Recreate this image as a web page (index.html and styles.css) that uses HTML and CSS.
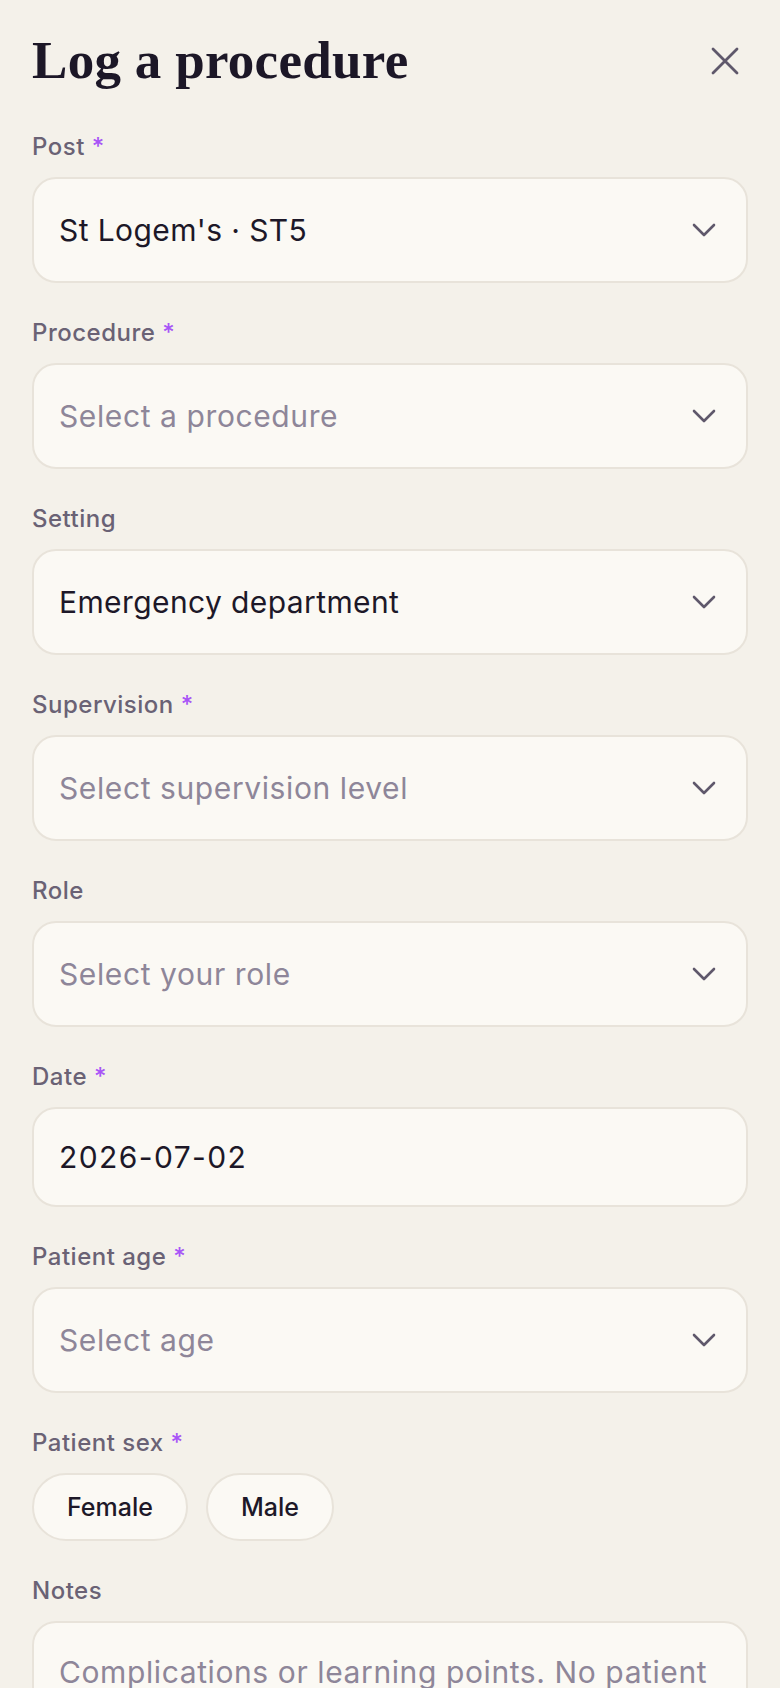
FILE: index.html
```html
<!DOCTYPE html>
<html lang="en">
<head>
    <meta charset="UTF-8">
    <meta name="viewport" content="width=device-width, initial-scale=1.0">
    <title>Log a procedure</title>
    <link rel="stylesheet" href="styles.css">
</head>
<body>
    <div class="sheet">
        <header class="sheet-head">
            <h1>Log a procedure</h1>
            <button class="close-btn" type="button" aria-label="Close">
                <svg width="28" height="28" viewBox="0 0 28 28" fill="none" stroke="currentColor" stroke-width="2.8" stroke-linecap="round">
                    <path d="M2 2L26 26M26 2L2 26"/>
                </svg>
            </button>
        </header>

        <form class="log-form">
            <div class="field">
                <label>Post <span class="req">*</span></label>
                <button type="button" class="select">
                    <span class="value">St Logem's · ST5</span>
                    <svg class="chevron" width="24" height="14" viewBox="0 0 24 14"><path d="M2 2L12 12L22 2"/></svg>
                </button>
            </div>

            <div class="field">
                <label>Procedure <span class="req">*</span></label>
                <button type="button" class="select">
                    <span class="value placeholder">Select a procedure</span>
                    <svg class="chevron" width="24" height="14" viewBox="0 0 24 14"><path d="M2 2L12 12L22 2"/></svg>
                </button>
            </div>

            <div class="field">
                <label>Setting</label>
                <button type="button" class="select">
                    <span class="value">Emergency department</span>
                    <svg class="chevron" width="24" height="14" viewBox="0 0 24 14"><path d="M2 2L12 12L22 2"/></svg>
                </button>
            </div>

            <div class="field">
                <label>Supervision <span class="req">*</span></label>
                <button type="button" class="select">
                    <span class="value placeholder">Select supervision level</span>
                    <svg class="chevron" width="24" height="14" viewBox="0 0 24 14"><path d="M2 2L12 12L22 2"/></svg>
                </button>
            </div>

            <div class="field">
                <label>Role</label>
                <button type="button" class="select">
                    <span class="value placeholder">Select your role</span>
                    <svg class="chevron" width="24" height="14" viewBox="0 0 24 14"><path d="M2 2L12 12L22 2"/></svg>
                </button>
            </div>

            <div class="field">
                <label for="date">Date <span class="req">*</span></label>
                <input type="text" id="date" class="text-input" value="2026-07-02">
            </div>

            <div class="field">
                <label>Patient age <span class="req">*</span></label>
                <button type="button" class="select">
                    <span class="value placeholder">Select age</span>
                    <svg class="chevron" width="24" height="14" viewBox="0 0 24 14"><path d="M2 2L12 12L22 2"/></svg>
                </button>
            </div>

            <div class="field">
                <label>Patient sex <span class="req">*</span></label>
                <div class="pills">
                    <button type="button" class="pill">Female</button>
                    <button type="button" class="pill">Male</button>
                </div>
            </div>

            <div class="field">
                <label for="notes">Notes</label>
                <textarea id="notes" class="notes" rows="4" placeholder="Complications or learning points. No patient identifiers."></textarea>
            </div>
        </form>
    </div>
</body>
</html>
```

FILE: styles.css
```css
body {
    margin: 0;
    background-color: #f4f1ea;
    color: #1d1828;
    font-family: 'Inter', 'Liberation Sans', sans-serif;
}

.sheet {
    padding: 30px 32px 40px;
}

.sheet-head {
    display: flex;
    justify-content: space-between;
    align-items: center;
    height: 60px;
    margin-bottom: 42px;
}

h1 {
    margin: 0;
    font-family: 'Liberation Serif', 'Times New Roman', serif;
    font-size: 53px;
    line-height: 60px;
    font-weight: bold;
    letter-spacing: 0.3px;
    color: #1c1727;
}

.close-btn {
    width: 50px;
    height: 50px;
    padding: 0;
    margin: 2px -2px 0 0;
    border: none;
    background: none;
    color: #5f586b;
    display: flex;
    align-items: center;
    justify-content: center;
    cursor: pointer;
}

.log-form {
    display: flex;
    flex-direction: column;
    gap: 35px;
}

.field {
    display: flex;
    flex-direction: column;
}

.field label {
    font-size: 24px;
    line-height: 30px;
    font-weight: 500;
    letter-spacing: 0.5px;
    color: #6a6275;
    margin-bottom: 15px;
}

.req {
    color: #a855f7;
}

.select,
.text-input,
.notes,
.pill {
    box-sizing: border-box;
    background-color: #fbf9f4;
    border: 2px solid #e8e3da;
    font-family: inherit;
    color: #1d1828;
}

.select {
    display: flex;
    align-items: center;
    justify-content: space-between;
    width: 100%;
    height: 106px;
    padding: 0 30px 0 25px;
    border-radius: 24px;
    text-align: left;
    cursor: pointer;
}

.value {
    font-size: 30px;
    line-height: 36px;
    letter-spacing: 0.4px;
}

.placeholder {
    color: #8e8699;
    letter-spacing: 0.6px;
}

.chevron {
    fill: none;
    stroke: #5f586b;
    stroke-width: 2.6;
    stroke-linecap: round;
    stroke-linejoin: round;
}

.text-input {
    width: 100%;
    height: 100px;
    padding: 0 25px;
    border-radius: 24px;
    font-size: 30px;
    letter-spacing: 1.4px;
    outline: none;
}

.pills {
    display: flex;
    gap: 18px;
}

.pill {
    height: 68px;
    padding: 0 33px;
    border-radius: 34px;
    font-size: 25px;
    font-weight: 500;
    cursor: pointer;
}

.notes {
    width: 100%;
    height: 200px;
    padding: 27px 25px;
    border-radius: 24px;
    font-size: 30px;
    line-height: 1.5;
    letter-spacing: 0.6px;
    resize: none;
    outline: none;
}

.notes::placeholder {
    color: #8e8699;
}
```
